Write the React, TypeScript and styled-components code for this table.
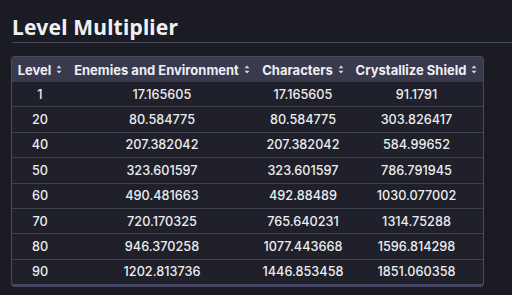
import React from "react";
import styled, { createGlobalStyle } from "styled-components";

const Global = createGlobalStyle`
  html, body { margin: 0; padding: 0; background: #1b1c23; }
  body { font-family: Inter, "Noto Sans", sans-serif; color: #e8e8ee; }
`;

const Page = styled.div`
  width: 512px;
  height: 295px;
  overflow: hidden;
  padding: 14px 0 0 11px;
  box-sizing: border-box;
`;

const Title = styled.h2`
  margin: 0 0 0 1px;
  font-family: "Noto Sans", sans-serif;
  font-weight: 700;
  font-size: 21px;
  line-height: 26px;
  color: #f1f1f4;
  letter-spacing: 0.2px;
`;

const Rule = styled.div`
  height: 1px;
  background: #4a4b5a;
  margin: 2px 0 13px 1px;
`;

const TableWrap = styled.div`
  width: 471px;
  border: 1px solid #4a4b5b;
  border-bottom: 3px solid #444663;
  border-radius: 4px;
  overflow: hidden;
  background: #1f2029;
`;

const Table = styled.table`
  width: 100%;
  border-collapse: collapse;
  table-layout: fixed;
`;

const HeadCell = styled.th`
  background: #393a4d;
  height: 25px;
  padding: 0;
  font-family: Inter, sans-serif;
  font-weight: 700;
  font-size: 13px;
  color: #eeeef4;
  text-align: center;
  white-space: nowrap;
`;

const HeadInner = styled.span`
  display: inline-flex;
  align-items: center;
  gap: 5px;
`;

const Row = styled.tr`
  border-top: 1px solid #3f404e;
  &:first-child { border-top: none; }
`;

const Cell = styled.td`
  height: 24.4px;
  padding: 0;
  text-align: center;
  font-family: Inter, sans-serif;
  font-weight: 500;
  font-size: 12.7px;
  color: #ececf0;
`;

const SortIcon = () => (
  <svg width="6" height="9" viewBox="0 0 6 9">
    <path d="M3 0.5 L5.5 3.3 H0.5 Z" fill="#d8d8e2" />
    <path d="M3 8.5 L5.5 5.7 H0.5 Z" fill="#d8d8e2" />
  </svg>
);

const cols = [
  { label: "Level", width: 56 },
  { label: "Enemies and Environment", width: 188 },
  { label: "Characters", width: 94 },
  { label: "Crystallize Shield", width: 133 },
];

const rows = [
  ["1", "17.165605", "17.165605", "91.1791"],
  ["20", "80.584775", "80.584775", "303.826417"],
  ["40", "207.382042", "207.382042", "584.99652"],
  ["50", "323.601597", "323.601597", "786.791945"],
  ["60", "490.481663", "492.88489", "1030.077002"],
  ["70", "720.170325", "765.640231", "1314.75288"],
  ["80", "946.370258", "1077.443668", "1596.814298"],
  ["90", "1202.813736", "1446.853458", "1851.060358"],
];

export default function App() {
  return (
    <Page>
      <Global />
      <Title>Level Multiplier</Title>
      <Rule />
      <TableWrap>
        <Table>
          <colgroup>
            {cols.map((c) => (
              <col key={c.label} style={{ width: c.width }} />
            ))}
          </colgroup>
          <thead>
            <tr>
              {cols.map((c) => (
                <HeadCell key={c.label}>
                  <HeadInner>
                    {c.label}
                    <SortIcon />
                  </HeadInner>
                </HeadCell>
              ))}
            </tr>
          </thead>
          <tbody>
            {rows.map((r) => (
              <Row key={r[0]}>
                {r.map((v, i) => (
                  <Cell key={i}>{v}</Cell>
                ))}
              </Row>
            ))}
          </tbody>
        </Table>
      </TableWrap>
    </Page>
  );
}
